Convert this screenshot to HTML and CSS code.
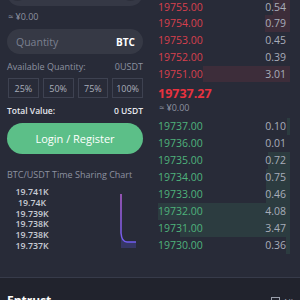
FILE: index.html
```html
<!DOCTYPE html>
<html lang="en">
<head>
  <meta charset="UTF-8" />
  <meta name="viewport" content="width=device-width, initial-scale=1.0"/>
  <title>BTC/USDT Trade</title>
  <link rel="stylesheet" href="styles.css">
</head>
<body>
  <div class="trade">
    <div class="order-form">
      <div class="price-box">
        <span class="step"></span>
        <span class="step"></span>
      </div>
      <div class="approx">≈ ¥0.00</div>

      <div class="qty-box">
        <span class="placeholder">Quantity</span>
        <span class="unit">BTC</span>
      </div>

      <div class="info-row">
        <span>Available Quantity:</span>
        <span>0USDT</span>
      </div>

      <div class="pct-row">
        <button class="pct">25%</button>
        <button class="pct">50%</button>
        <button class="pct">75%</button>
        <button class="pct">100%</button>
      </div>

      <div class="info-row total">
        <span>Total Value:</span>
        <span>0 USDT</span>
      </div>

      <button class="btn-login">Login / Register</button>

      <div class="chart-title">BTC/USDT Time Sharing Chart</div>
      <div class="chart">
        <div class="axis">
          <span>19.741K</span>
          <span>19.74K</span>
          <span>19.739K</span>
          <span>19.738K</span>
          <span>19.738K</span>
          <span>19.737K</span>
        </div>
        <svg class="plot" width="86" height="64" viewBox="0 0 86 64">
          <defs>
            <linearGradient id="lineGrad" x1="0" y1="0" x2="0" y2="1">
              <stop offset="0" stop-color="#b660d6"/>
              <stop offset="1" stop-color="#6f5cf0"/>
            </linearGradient>
          </defs>
          <path d="M64 48 C64.5 52 66 55 70 55 L79 55 L79 61 L64 61 Z" fill="#363766"/>
          <path d="M64 7 L64 46 C64.5 52 66 55 70 55 L79 55" fill="none" stroke="url(#lineGrad)" stroke-width="1.5"/>
        </svg>
      </div>
    </div>

    <div class="book">
      <div class="asks">
        <div class="row ask"><i class="depth" style="width:13%"></i><span>19755.00</span><span class="qty">0.54</span></div>
        <div class="row ask"><i class="depth" style="width:19%"></i><span>19754.00</span><span class="qty">0.79</span></div>
        <div class="row ask"><i class="depth" style="width:0%"></i><span>19753.00</span><span class="qty">0.45</span></div>
        <div class="row ask"><i class="depth" style="width:0%"></i><span>19752.00</span><span class="qty">0.39</span></div>
        <div class="row ask"><i class="depth" style="width:66%"></i><span>19751.00</span><span class="qty">3.01</span></div>
      </div>

      <div class="last-price">19737.27</div>
      <div class="approx small">≈ ¥0.00</div>

      <div class="bids">
        <div class="row bid"><i class="depth" style="width:2%"></i><span>19737.00</span><span class="qty">0.10</span></div>
        <div class="row bid"><i class="depth" style="width:0%"></i><span>19736.00</span><span class="qty">0.01</span></div>
        <div class="row bid"><i class="depth" style="width:17%"></i><span>19735.00</span><span class="qty">0.72</span></div>
        <div class="row bid"><i class="depth" style="width:18%"></i><span>19734.00</span><span class="qty">0.75</span></div>
        <div class="row bid"><i class="depth" style="width:18%"></i><span>19733.00</span><span class="qty">0.46</span></div>
        <div class="row bid"><i class="depth" style="width:100%"></i><span>19732.00</span><span class="qty">4.08</span></div>
        <div class="row bid"><i class="depth" style="width:83%"></i><span>19731.00</span><span class="qty">3.47</span></div>
        <div class="row bid"><i class="depth" style="width:3%"></i><span>19730.00</span><span class="qty">0.36</span></div>
      </div>
    </div>
  </div>

  <div class="entrust">
    <h2>Entrust</h2>
    <span class="all">
      <svg width="9" height="10" viewBox="0 0 9 10"><rect x="0.5" y="0.5" width="8" height="9" fill="none" stroke="#9a9fab"/><path d="M2 3.5h5M2 6h5" stroke="#9a9fab"/></svg>
      All
    </span>
  </div>
</body>
</html>
```

FILE: styles.css
```css
body {
  margin: 0;
  background-color: #282b38;
  font-family: 'Open Sans', 'Noto Sans', sans-serif;
  color: #e6e8ee;
  height: 300px;
  overflow: hidden;
}

.trade {
  display: flex;
  padding: 0 10px 0 7px;
  height: 277px;
  border-bottom: 1px solid #373b4a;
  overflow: hidden;
}

.order-form {
  width: 136px;
  flex-shrink: 0;
}

.price-box {
  margin-top: -20px;
  height: 26px;
  border-radius: 13px;
  background: #353845;
  display: flex;
  justify-content: space-between;
  align-items: center;
  padding: 0 3px 0 1px;
  box-sizing: border-box;
}

.step {
  width: 19px;
  height: 19px;
  border-radius: 50%;
  background: #2d303c;
  margin-top: -4px;
}

.approx {
  margin-top: 5px;
  font-size: 9px;
  line-height: 12px;
  color: #8d92a0;
  padding-left: 1px;
}

.qty-box {
  margin-top: 6px;
  height: 25px;
  border-radius: 13px;
  background: #363945;
  display: flex;
  justify-content: space-between;
  align-items: center;
  padding: 0 8px 0 9px;
}

.placeholder {
  font-size: 10.5px;
  color: #7b8090;
}

.unit {
  font-size: 10px;
  font-weight: 700;
  color: #ffffff;
}

.info-row {
  margin-top: 7px;
  display: flex;
  justify-content: space-between;
  font-size: 9px;
  line-height: 12px;
  color: #8d92a0;
}

.info-row.total {
  color: #e6e8ee;
  font-weight: 600;
  font-size: 8.5px;
}

.pct-row {
  margin-top: 5px;
  display: grid;
  grid-template-columns: repeat(4, 1fr);
  gap: 4px;
  padding-left: 1px;
}

.pct {
  height: 20px;
  background: transparent;
  border: 1px solid #3e4251;
  color: #a9aeba;
  font-family: inherit;
  font-size: 9px;
  padding: 0;
}

.btn-login {
  margin-top: 6px;
  width: 100%;
  height: 31px;
  border: none;
  border-radius: 16px;
  background-color: #5cbf88;
  color: #ffffff;
  font-family: inherit;
  font-size: 11px;
}

.chart-title {
  margin-top: 15px;
  font-size: 9px;
  line-height: 12px;
  color: #8d92a0;
}

.chart {
  margin-top: 6px;
  display: flex;
}

.axis {
  width: 50px;
  flex-shrink: 0;
  display: flex;
  flex-direction: column;
  align-items: center;
  font-size: 8.8px;
  font-weight: 600;
  line-height: 10.8px;
  color: #c9ccd4;
}

.plot {
  display: block;
  flex-shrink: 0;
}

.book {
  width: 132px;
  margin-left: 15px;
}

.asks {
  margin-top: -1.4px;
}

.row {
  position: relative;
  display: flex;
  justify-content: space-between;
  padding-right: 4px;
  font-size: 10.5px;
  line-height: 16.75px;
  height: 16.75px;
}

.row span {
  position: relative;
}

.row .qty {
  color: #a8adba;
}

.depth {
  position: absolute;
  top: 0;
  right: 0;
  bottom: 0;
}

.ask span:first-of-type {
  color: #d8404e;
}

.ask .depth {
  background: rgba(214, 64, 78, 0.12);
}

.bids {
  margin-top: 4.5px;
}

.bid {
  height: 17px;
  line-height: 17px;
}

.bid span:first-of-type {
  color: #4fb37c;
}

.bid .depth {
  background: rgba(79, 179, 124, 0.13);
}

.last-price {
  margin-top: 3.6px;
  font-size: 12.5px;
  font-weight: 700;
  line-height: 16px;
  color: #e8323f;
}

.approx.small {
  margin-top: 0;
  font-size: 9px;
}

.entrust {
  background: #21232d;
  height: 22px;
  display: flex;
  justify-content: space-between;
  padding: 15px 7px 0;
}

.entrust h2 {
  margin: 0;
  font-size: 12px;
  font-weight: 700;
  color: #ffffff;
  line-height: 16px;
}

.all {
  display: flex;
  align-items: center;
  gap: 3px;
  height: 10px;
  margin-top: 4px;
  font-size: 9px;
  color: #9a9fab;
}
```
